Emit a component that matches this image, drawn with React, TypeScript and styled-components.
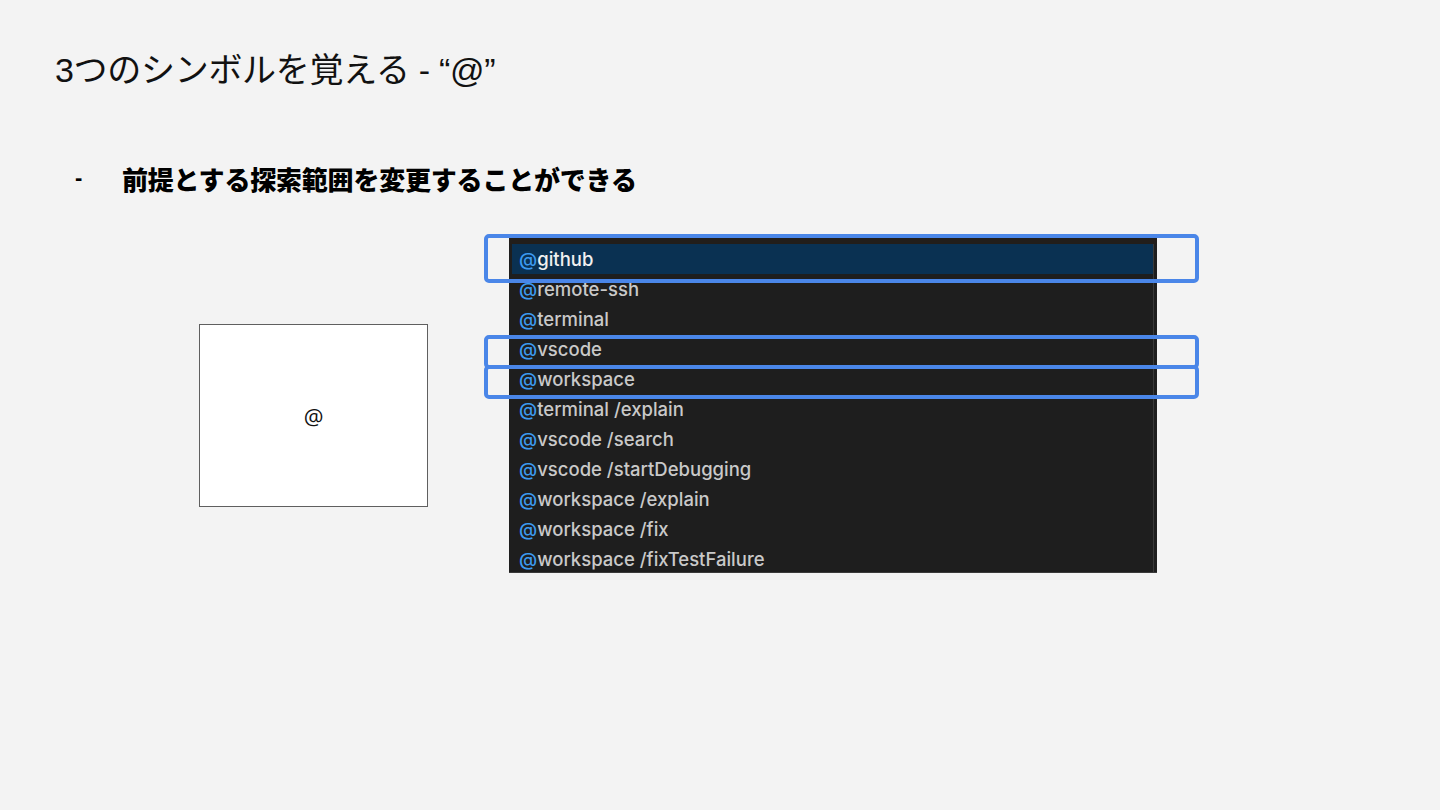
import * as React from 'react';
import styled, { createGlobalStyle } from 'styled-components';

const GlobalStyle = createGlobalStyle`
  html, body {
    margin: 0;
    padding: 0;
    background: #f3f3f3;
  }
  body {
    font-family: "Liberation Sans", "Noto Sans CJK JP", sans-serif;
  }
`;

const Slide = styled.div`
  width: 1440px;
  height: 810px;
  background: #f3f3f3;
  overflow: hidden;
  display: flex;
  flex-direction: column;
`;

const Title = styled.h1`
  margin: 50px 0 0 55px;
  font-family: "Liberation Sans", "Noto Sans CJK JP", sans-serif;
  font-weight: 400;
  font-size: 34px;
  line-height: 40px;
  color: #111;
  letter-spacing: -0.3px;
`;

const Bullet = styled.div`
  margin: 70px 0 0 75px;
  display: flex;
  align-items: center;
  height: 36px;
  font-family: "Noto Sans CJK JP", sans-serif;
  font-weight: 900;
  font-size: 26px;
  color: #000;
`;

const Dash = styled.span`
  width: 47px;
  font-family: "Liberation Sans", sans-serif;
  font-weight: 700;
  font-size: 22px;
`;

const BulletText = styled.span`
  letter-spacing: -0.2px;
`;

const ContentRow = styled.div`
  margin-top: 42px;
  display: flex;
  align-items: flex-start;
`;

const SymbolBox = styled.div`
  margin: 86px 0 0 199px;
  width: 229px;
  height: 183px;
  box-sizing: border-box;
  border: 1.5px solid #5f5f5f;
  background: #fff;
  display: flex;
  align-items: center;
  justify-content: center;
  font-family: "Open Sans", "DejaVu Sans", sans-serif;
  font-size: 22px;
  color: #111;
`;

const PanelWrap = styled.div`
  position: relative;
  margin-left: 81px;
`;

const Panel = styled.div`
  width: 648px;
  height: 335px;
  box-sizing: border-box;
  background: #1e1e1e;
  border-bottom: 1px solid #3a3a3a;
  padding: 6px 3px 0 3px;
  overflow: hidden;
  position: relative;
  &::before {
    content: '';
    position: absolute;
    left: 0;
    right: 0;
    top: 0;
    height: 6px;
    background: #221e1b;
  }
`;

const List = styled.div`
  border-right: 1px solid #3a3a3a;
  display: flex;
  flex-direction: column;
`;

const Item = styled.div<{ $active?: boolean }>`
  height: 30px;
  display: flex;
  align-items: center;
  padding-left: 7px;
  background: ${(p) => (p.$active ? '#0a3152' : 'transparent')};
  color: ${(p) => (p.$active ? '#f0f0f0' : '#c9c9c9')};
  font-family: Inter, "Liberation Sans", sans-serif;
  font-weight: 500;
  font-size: 18.5px;
  letter-spacing: 0;
  white-space: pre;
`;

const At = styled.span`
  color: #3c9bf0;
`;

const Outline = styled.div<{ $top: number; $height: number }>`
  position: absolute;
  left: -25px;
  top: ${(p) => p.$top}px;
  width: 715px;
  height: ${(p) => p.$height}px;
  box-sizing: border-box;
  border: 4px solid #4a86e8;
  border-radius: 5px;
  pointer-events: none;
`;

const items = [
  'github',
  'remote-ssh',
  'terminal',
  'vscode',
  'workspace',
  'terminal /explain',
  'vscode /search',
  'vscode /startDebugging',
  'workspace /explain',
  'workspace /fix',
  'workspace /fixTestFailure',
];

export default function App() {
  return (
    <Slide>
      <GlobalStyle />
      <Title>3つのシンボルを覚える - “@”</Title>
      <Bullet>
        <Dash>-</Dash>
        <BulletText>前提とする探索範囲を変更することができる</BulletText>
      </Bullet>
      <ContentRow>
        <SymbolBox>@</SymbolBox>
        <PanelWrap>
          <Panel>
            <List>
              {items.map((name, i) => (
                <Item key={name} $active={i === 0}>
                  <At>@</At>
                  {name}
                </Item>
              ))}
            </List>
          </Panel>
          <Outline $top={-4} $height={49} />
          <Outline $top={97} $height={34} />
          <Outline $top={127} $height={34} />
        </PanelWrap>
      </ContentRow>
    </Slide>
  );
}
